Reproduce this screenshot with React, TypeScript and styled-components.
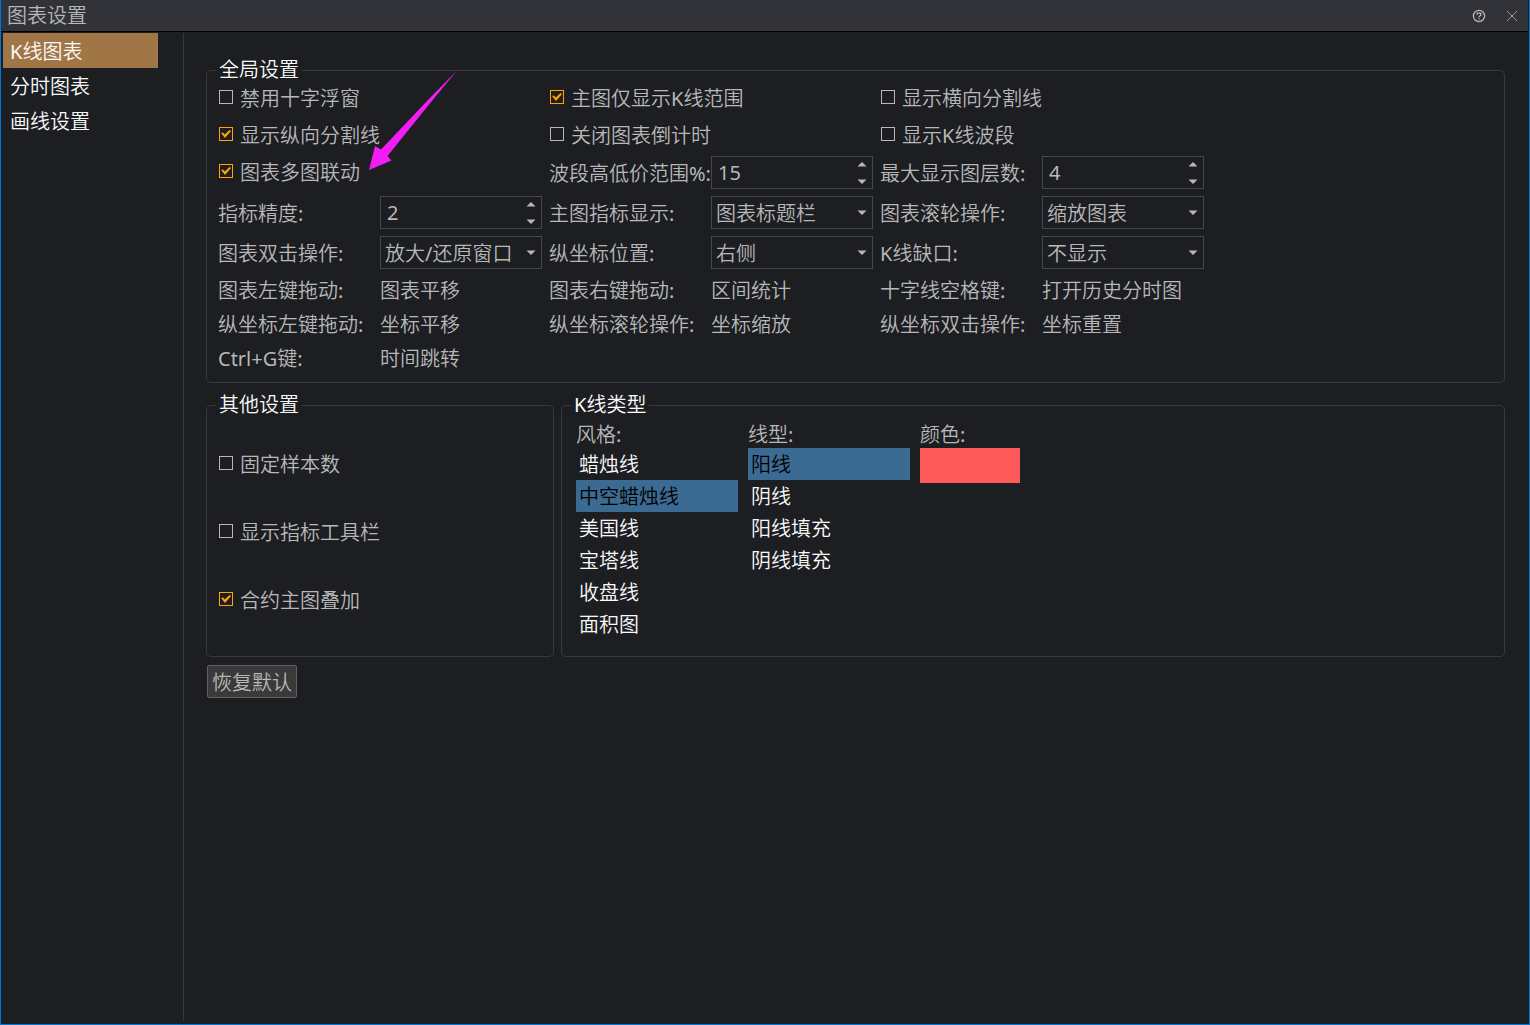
import React, { useState } from 'react';
import styled, { createGlobalStyle, css } from 'styled-components';

const color = {
  bg: '#1d1e22',
  line: '#38393b',
  field: '#46474a',
  text: '#b8b8b8',
  bright: '#fafafa',
  accent: '#ffa500',
  select: '#3b6a92',
};

const GlobalStyle = createGlobalStyle`
  *, *::before, *::after { box-sizing: border-box; }
  body { margin: 0; background: ${color.bg}; }
  body, button, input, select {
    font-family: 'Noto Sans', 'Noto Sans CJK SC DemiLight', 'Noto Sans CJK SC', sans-serif;
    font-size: 20px;
    font-weight: 400;
  }
`;

const textLine = css`
  display: block;
  padding-top: 2px;
  line-height: 25px;
`;

const Text = styled.span`${textLine}`;
const FieldLabel = styled.label`${textLine}`;

const Window = styled.div`
  position: relative;
  display: flex;
  flex-direction: column;
  min-height: 100vh;
  border: 1px solid #0078d7;
  border-top: 0;
  background: ${color.bg};
  color: ${color.text};
  white-space: nowrap;
`;

const TitleBar = styled.header`
  display: flex;
  align-items: center;
  justify-content: space-between;
  height: 32px;
  padding: 0 8px 0 6px;
  margin-right: 1px;
  border-bottom: 1px solid #000;
  background: #323338;
`;

const Title = styled.h1`
  margin: 0;
  font-size: 20px;
  font-weight: 400;
  line-height: 31px;
`;

const TitleActions = styled.div`
  display: flex;
  gap: 17px;
`;

const IconButton = styled.button`
  display: grid;
  place-items: center;
  width: 16px;
  height: 16px;
  padding: 0;
  border: 0;
  background: none;
  color: ${color.text};
`;

const Body = styled.div`
  display: flex;
  flex: 1;
  padding: 1px 0 3px 2px;
`;

const Sidebar = styled.nav`
  display: flex;
  flex-direction: column;
  flex: none;
  width: 181px;
  padding-right: 25px;
  border-right: 1px solid ${color.line};
`;

const NavItem = styled.button<{ $active: boolean }>`
  height: 35px;
  padding: 2px 7px 0;
  border: 0;
  text-align: left;
  line-height: 33px;
  background: ${(p) => (p.$active ? '#a07646' : 'transparent')};
  color: ${color.bright};
`;

const Main = styled.main`
  flex: 1;
  min-width: 0;
  padding: 26px 24px 0 22px;
`;

const Group = styled.fieldset`
  min-width: 0;
  margin: 0;
  padding: 0 11px 11px 9px;
  border: 1px solid ${color.line};
  border-radius: 5px;
`;

const Legend = styled.legend`
  padding: 0 3px 2px;
  line-height: 21px;
  color: ${color.bright};
`;

const SettingGrid = styled.div`
  display: grid;
  grid-template-columns: repeat(3, 324px);
  gap: 7px;
  padding-left: 2px;
`;

const Setting = styled.div`
  display: grid;
  grid-template-columns: 162px 162px;
  align-items: center;
`;

const Check = styled.label`
  display: flex;
  align-items: center;
  gap: 7px;
  height: 30px;
`;

const CheckInput = styled.input`
  appearance: none;
  display: grid;
  place-items: center;
  width: 14px;
  height: 14px;
  margin: 0 0 0 1px;
  border: 1px solid ${color.text};

  &:checked { border-color: ${color.accent}; }
  &:checked::before {
    content: '';
    width: 10px;
    height: 8px;
    background: ${color.accent};
    clip-path: polygon(0 38%, 20% 30%, 38% 55%, 85% 0, 100% 12%, 40% 100%);
  }
`;

const OtherList = styled.div`
  display: grid;
  grid-auto-rows: 68px;
  align-items: center;
  padding: 12px 0 12px 2px;
`;

const Field = styled.span`
  position: relative;
  display: flex;
  height: 33px;
  border: 1px solid ${color.field};
`;

const NumberInput = styled.input`
  flex: 1;
  min-width: 0;
  padding: 0 6px;
  border: 0;
  outline: 0;
  background: none;
  color: ${color.text};
  appearance: textfield;
  &::-webkit-inner-spin-button { appearance: none; margin: 0; }
`;

const Steps = styled.span`
  display: flex;
  flex-direction: column;
  justify-content: space-between;
  width: 20px;
  padding: 4px 0 3px;
`;

const Step = styled.button`
  display: grid;
  place-items: center;
  height: 7px;
  padding: 0;
  border: 0;
  background: none;
  color: ${color.text};
`;

const Select = styled.select`
  appearance: none;
  width: 100%;
  padding: 2px 20px 0 4px;
  border: 0;
  outline: 0;
  background: none;
  color: ${color.text};
`;

const SelectArrow = styled.span`
  position: absolute;
  top: 0;
  right: 5px;
  bottom: 0;
  display: grid;
  place-items: center;
  pointer-events: none;
`;

const GroupRow = styled.div`
  display: grid;
  grid-template-columns: 348px 1fr;
  gap: 7px;
  margin: 11px 0 8px;
`;

const TypeColumns = styled.div`
  display: flex;
  gap: 10px;
  padding: 3px 0 5px 5px;
`;

const TypeColumn = styled.div`
  display: flex;
  flex-direction: column;
  gap: 1px;
`;

const ListBox = styled.div`
  display: flex;
  flex-direction: column;
  width: 162px;
`;

const ListItem = styled.button<{ $active: boolean }>`
  height: 32px;
  padding: 2px 3px 0;
  border: 0;
  text-align: left;
  line-height: 30px;
  background: ${(p) => (p.$active ? color.select : 'transparent')};
  color: ${(p) => (p.$active ? '#000' : color.bright)};
`;

const ColorInput = styled.input`
  appearance: none;
  width: 100px;
  height: 35px;
  padding: 0;
  border: 0;
  background: none;
  &::-webkit-color-swatch-wrapper { padding: 0; }
  &::-webkit-color-swatch { border: 0; border-radius: 0; }
`;

const ResetButton = styled.button`
  display: block;
  height: 33px;
  margin-left: 1px;
  padding: 2px 4px 0;
  border: 1px solid #606060;
  border-radius: 2px;
  background: #3a3a3a;
  color: ${color.text};
  line-height: 29px;
`;

const Pointer = styled.svg`
  position: absolute;
  left: 366px;
  top: 70px;
  pointer-events: none;
`;

const Caret = ({ up = false }: { up?: boolean }) => (
  <svg width="10" height="5" viewBox="0 0 10 5" fill="currentColor" aria-hidden="true">
    <path d={up ? 'M0.5 4.5H9.5L5 0Z' : 'M0.5 0.5H9.5L5 5Z'} />
  </svg>
);

function CheckBox({ label, on = false }: { label: string; on?: boolean }) {
  return (
    <Check>
      <CheckInput type="checkbox" defaultChecked={on} />
      <Text>{label}</Text>
    </Check>
  );
}

function SpinBox({ label, id, initial }: { label: string; id: string; initial: number }) {
  const [value, setValue] = useState(initial);
  return (
    <Setting>
      <FieldLabel htmlFor={id}>{label}</FieldLabel>
      <Field>
        <NumberInput id={id} type="number" value={value} onChange={(e) => setValue(Number(e.target.value))} />
        <Steps>
          <Step type="button" aria-label="+" onClick={() => setValue(value + 1)}><Caret up /></Step>
          <Step type="button" aria-label="-" onClick={() => setValue(value - 1)}><Caret /></Step>
        </Steps>
      </Field>
    </Setting>
  );
}

function ComboBox({ label, id, value }: { label: string; id: string; value: string }) {
  return (
    <Setting>
      <FieldLabel htmlFor={id}>{label}</FieldLabel>
      <Field>
        <Select id={id} defaultValue={value}>
          <option>{value}</option>
        </Select>
        <SelectArrow><Caret /></SelectArrow>
      </Field>
    </Setting>
  );
}

const Info = ({ label, value }: { label: string; value: string }) => (
  <Setting>
    <Text>{label}</Text>
    <Text>{value}</Text>
  </Setting>
);

function Choices({ label, id, items, initial }: { label: string; id: string; items: string[]; initial: number }) {
  const [active, setActive] = useState(initial);
  return (
    <TypeColumn>
      <Text id={id}>{label}</Text>
      <ListBox role="listbox" aria-labelledby={id}>
        {items.map((item, i) => (
          <ListItem key={item} type="button" role="option" aria-selected={i === active} $active={i === active} onClick={() => setActive(i)}>
            {item}
          </ListItem>
        ))}
      </ListBox>
    </TypeColumn>
  );
}

const pages = ['K线图表', '分时图表', '画线设置'];

export default function App() {
  const [page, setPage] = useState(0);
  return (
    <Window>
      <GlobalStyle />
      <TitleBar>
        <Title>图表设置</Title>
        <TitleActions>
          <IconButton type="button" aria-label="帮助">
            <svg width="14" height="14" viewBox="0 0 14 14" fill="none" stroke="currentColor" strokeWidth="1.3">
              <circle cx="7" cy="7" r="5.6" />
              <path d="M5 5.7C5 4.4 5.8 3.8 7 3.8S9 4.5 9 5.5C9 6.8 7 6.8 7 8.3M7 9.3V10.6" />
            </svg>
          </IconButton>
          <IconButton type="button" aria-label="关闭">
            <svg width="12" height="12" viewBox="0 0 12 12" fill="none" stroke="currentColor" strokeWidth="0.8">
              <path d="M1 1L11 11M11 1L1 11" />
            </svg>
          </IconButton>
        </TitleActions>
      </TitleBar>
      <Body>
        <Sidebar>
          {pages.map((name, i) => (
            <NavItem key={name} type="button" $active={i === page} onClick={() => setPage(i)}>{name}</NavItem>
          ))}
        </Sidebar>
        <Main>
          <Group>
            <Legend>全局设置</Legend>
            <SettingGrid>
              <CheckBox label="禁用十字浮窗" />
              <CheckBox label="主图仅显示K线范围" on />
              <CheckBox label="显示横向分割线" />
              <CheckBox label="显示纵向分割线" on />
              <CheckBox label="关闭图表倒计时" />
              <CheckBox label="显示K线波段" />
              <CheckBox label="图表多图联动" on />
              <SpinBox id="range" label="波段高低价范围%:" initial={15} />
              <SpinBox id="layers" label="最大显示图层数:" initial={4} />
              <SpinBox id="precision" label="指标精度:" initial={2} />
              <ComboBox id="indicator" label="主图指标显示:" value="图表标题栏" />
              <ComboBox id="wheel" label="图表滚轮操作:" value="缩放图表" />
              <ComboBox id="dblclick" label="图表双击操作:" value="放大/还原窗口" />
              <ComboBox id="axis" label="纵坐标位置:" value="右侧" />
              <ComboBox id="gap" label="K线缺口:" value="不显示" />
              <Info label="图表左键拖动:" value="图表平移" />
              <Info label="图表右键拖动:" value="区间统计" />
              <Info label="十字线空格键:" value="打开历史分时图" />
              <Info label="纵坐标左键拖动:" value="坐标平移" />
              <Info label="纵坐标滚轮操作:" value="坐标缩放" />
              <Info label="纵坐标双击操作:" value="坐标重置" />
              <Info label="Ctrl+G键:" value="时间跳转" />
            </SettingGrid>
          </Group>
          <GroupRow>
            <Group>
              <Legend>其他设置</Legend>
              <OtherList>
                <CheckBox label="固定样本数" />
                <CheckBox label="显示指标工具栏" />
                <CheckBox label="合约主图叠加" on />
              </OtherList>
            </Group>
            <Group>
              <Legend>K线类型</Legend>
              <TypeColumns>
                <Choices id="style" label="风格:" initial={1} items={['蜡烛线', '中空蜡烛线', '美国线', '宝塔线', '收盘线', '面积图']} />
                <Choices id="line" label="线型:" initial={0} items={['阳线', '阴线', '阳线填充', '阴线填充']} />
                <TypeColumn>
                  <FieldLabel htmlFor="color">颜色:</FieldLabel>
                  <ColorInput id="color" type="color" defaultValue="#ff5a5a" />
                </TypeColumn>
              </TypeColumns>
            </Group>
          </GroupRow>
          <ResetButton type="button">恢复默认</ResetButton>
        </Main>
      </Body>
      <Pointer width="90" height="101" viewBox="0 0 90 101" fill="#f41cf4" aria-hidden="true">
        <path d="M90 0.5L61 30L14 79.5L8 76L2 100L24.5 90.5L20.5 86L64 32Z" />
      </Pointer>
    </Window>
  );
}
